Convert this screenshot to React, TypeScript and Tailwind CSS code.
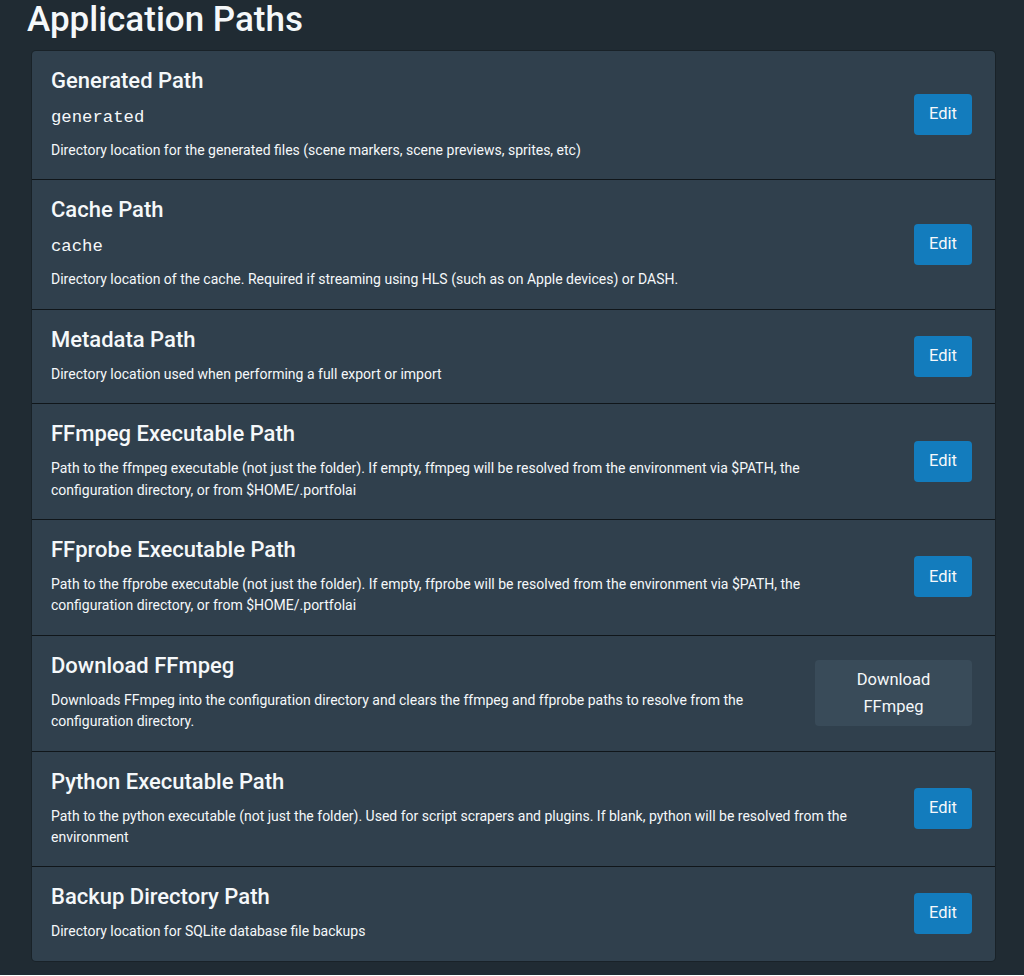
import React from 'react';

interface PathSetting {
  title: string;
  value?: string;
  description: string;
  action: 'edit' | 'download';
}

const settings: PathSetting[] = [
  {
    title: 'Generated Path',
    value: 'generated',
    description: 'Directory location for the generated files (scene markers, scene previews, sprites, etc)',
    action: 'edit',
  },
  {
    title: 'Cache Path',
    value: 'cache',
    description: 'Directory location of the cache. Required if streaming using HLS (such as on Apple devices) or DASH.',
    action: 'edit',
  },
  {
    title: 'Metadata Path',
    description: 'Directory location used when performing a full export or import',
    action: 'edit',
  },
  {
    title: 'FFmpeg Executable Path',
    description:
      'Path to the ffmpeg executable (not just the folder). If empty, ffmpeg will be resolved from the environment via $PATH, the configuration directory, or from $HOME/.portfolai',
    action: 'edit',
  },
  {
    title: 'FFprobe Executable Path',
    description:
      'Path to the ffprobe executable (not just the folder). If empty, ffprobe will be resolved from the environment via $PATH, the configuration directory, or from $HOME/.portfolai',
    action: 'edit',
  },
  {
    title: 'Download FFmpeg',
    description:
      'Downloads FFmpeg into the configuration directory and clears the ffmpeg and ffprobe paths to resolve from the configuration directory.',
    action: 'download',
  },
  {
    title: 'Python Executable Path',
    description:
      'Path to the python executable (not just the folder). Used for script scrapers and plugins. If blank, python will be resolved from the environment',
    action: 'edit',
  },
  {
    title: 'Backup Directory Path',
    description: 'Directory location for SQLite database file backups',
    action: 'edit',
  },
];

function SettingRow({ setting, last }: { setting: PathSetting; last: boolean }) {
  return (
    <div
      className={`flex items-center justify-between gap-6 pl-[19px] pr-[23px] pt-[17px] pb-[18px] ${
        last ? '' : 'border-b border-[#10161a]'
      }`}
    >
      <div className="min-w-0 flex-1">
        <h3 className="text-[22px] font-medium leading-[26px] text-[#f5f8fa] mb-[11px]">{setting.title}</h3>
        {setting.value && (
          <div className="font-['Liberation_Mono',monospace] text-[17.3px] leading-[26px] text-[#f5f8fa] mb-[9px]">
            {setting.value}
          </div>
        )}
        <div className="text-[14px] leading-[21.4px] text-[#f5f8fa] max-w-[800px]">{setting.description}</div>
      </div>
      {setting.action === 'edit' ? (
        <button
          type="button"
          className="shrink-0 h-[41px] px-[15px] rounded-[4px] bg-[#137cbd] text-[16.5px] text-[#f5f8fa]"
        >
          Edit
        </button>
      ) : (
        <button
          type="button"
          className="shrink-0 w-[157px] h-[66px] px-[24px] rounded-[4px] bg-[#394b59] text-[16.5px] leading-[27px] text-[#f5f8fa]"
        >
          Download FFmpeg
        </button>
      )}
    </div>
  );
}

export default function App() {
  return (
    <div className="min-h-[976px] w-full bg-[#202b33] pl-[32px] pr-[29px] font-['Roboto',sans-serif]">
      <h1 className="-ml-[5px] text-[35px] font-medium leading-[42px] text-[#f5f8fa] -mt-[1px] mb-[10px]">
        Application Paths
      </h1>
      <div className="rounded-[4px] bg-[#30404d] shadow-[0_0_0_1px_rgba(16,22,26,0.4)]">
        {settings.map((s, i) => (
          <SettingRow key={s.title} setting={s} last={i === settings.length - 1} />
        ))}
      </div>
    </div>
  );
}
